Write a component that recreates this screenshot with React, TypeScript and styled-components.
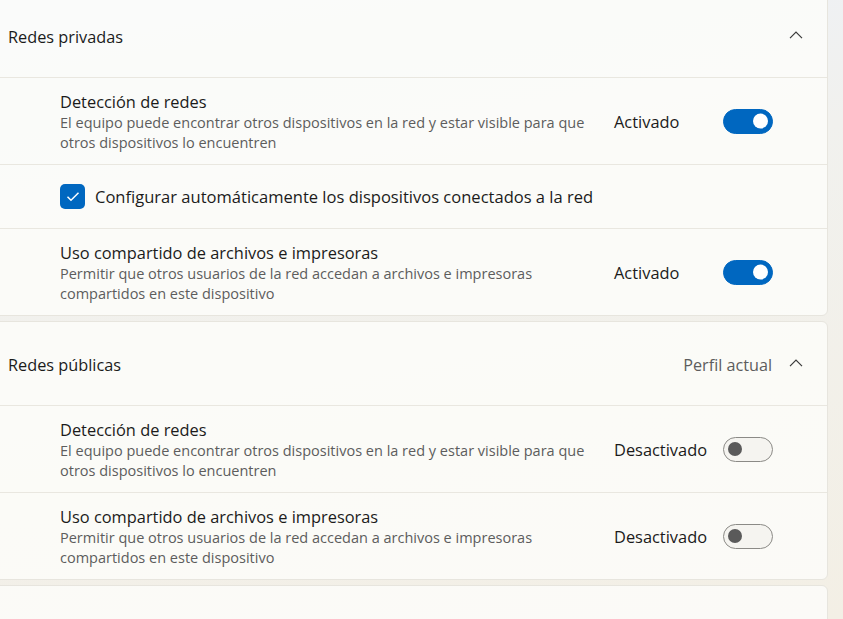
import React, { useState } from 'react';
import { createGlobalStyle, styled } from 'styled-components';

const GlobalStyle = createGlobalStyle`
  html, body {
    margin: 0;
    padding: 0;
    height: 100%;
    overflow: hidden;
  }
  body {
    font-family: "Open Sans", "Noto Sans", sans-serif;
    background: linear-gradient(170deg, #edf1f8 0%, #f1f1ee 35%, #f3efe5 100%);
    color: #1b1b1b;
  }
`;

const Page = styled.div`
  display: flex;
  flex-direction: column;
  gap: 5px;
  margin: -7px 15px 0 -12px;
`;

const Card = styled.section`
  background: rgba(252, 252, 250, 0.82);
  border: 1px solid #e7e5de;
  border-radius: 6px;
  overflow: hidden;
`;

const Header = styled.div<{ $height: number }>`
  display: flex;
  align-items: center;
  height: ${(p) => p.$height}px;
  padding: 3px 11px 0 19px;
  box-sizing: border-box;
`;

const HeaderTitle = styled.div`
  flex: 1;
  font-size: 16.3px;
`;

const HeaderMeta = styled.div`
  font-size: 16.2px;
  color: #5d5d5d;
  margin-right: 4px;
`;

const ChevronBox = styled.div`
  width: 40px;
  display: flex;
  justify-content: center;
  align-items: center;
  padding-bottom: 5px;
  color: #3a3a3a;
`;

const Row = styled.div<{ $height: number }>`
  display: flex;
  align-items: center;
  min-height: ${(p) => p.$height}px;
  padding: 0 54px 0 71px;
  border-top: 1px solid #e9e7e0;
`;

const RowText = styled.div`
  flex: 1;
  display: flex;
  flex-direction: column;
  padding-top: 3px;
`;

const RowTitle = styled.div`
  font-size: 16.4px;
  line-height: 20px;
  margin-bottom: 1px;
`;

const RowDesc = styled.div`
  font-size: 14.5px;
  line-height: 20px;
  color: #5d5d5d;
  max-width: 540px;
`;

const Status = styled.div`
  width: 94px;
  margin-right: 15px;
  font-size: 16.4px;
`;

const Track = styled.button<{ $on: boolean }>`
  position: relative;
  width: 50px;
  height: 25px;
  padding: 0;
  border-radius: 13px;
  cursor: pointer;
  border: ${(p) => (p.$on ? '1px solid #0067c0' : '1px solid #8b8a86')};
  background: ${(p) => (p.$on ? '#0067c0' : '#f5f4f0')};
`;

const Knob = styled.span<{ $on: boolean }>`
  position: absolute;
  top: 50%;
  left: ${(p) => (p.$on ? '29px' : '4px')};
  width: ${(p) => (p.$on ? '15px' : '14px')};
  height: ${(p) => (p.$on ? '15px' : '14px')};
  border-radius: 50%;
  transform: translateY(-50%);
  background: ${(p) => (p.$on ? '#ffffff' : '#5a5a5a')};
`;

const CheckLabel = styled.label`
  display: flex;
  align-items: center;
  gap: 10px;
  font-size: 16.55px;
  cursor: pointer;
`;

const CheckBox = styled.span`
  width: 25px;
  height: 25px;
  border-radius: 5px;
  background: #0067c0;
  display: flex;
  align-items: center;
  justify-content: center;
`;

const Chevron = () => (
  <svg width="14" height="8" viewBox="0 0 14 8" fill="none">
    <path d="M1 7.2L7 1.2L13 7.2" stroke="currentColor" strokeWidth="1.2" />
  </svg>
);

const Toggle: React.FC<{ initial: boolean }> = ({ initial }) => {
  const [on, setOn] = useState(initial);
  return (
    <>
      <Status>{on ? 'Activado' : 'Desactivado'}</Status>
      <Track type="button" $on={on} onClick={() => setOn(!on)}>
        <Knob $on={on} />
      </Track>
    </>
  );
};

const SettingRow: React.FC<{ title: string; desc: string; on: boolean }> = ({ title, desc, on }) => (
  <Row $height={86}>
    <RowText>
      <RowTitle>{title}</RowTitle>
      <RowDesc>{desc}</RowDesc>
    </RowText>
    <Toggle initial={on} />
  </Row>
);

const DISCOVERY = 'Detección de redes';
const DISCOVERY_DESC =
  'El equipo puede encontrar otros dispositivos en la red y estar visible para que otros dispositivos lo encuentren';
const SHARING = 'Uso compartido de archivos e impresoras';
const SHARING_DESC =
  'Permitir que otros usuarios de la red accedan a archivos e impresoras compartidos en este dispositivo';

export default function App() {
  return (
    <Page>
      <GlobalStyle />
      <Card>
        <Header $height={83}>
          <HeaderTitle>Redes privadas</HeaderTitle>
          <ChevronBox>
            <Chevron />
          </ChevronBox>
        </Header>
        <SettingRow title={DISCOVERY} desc={DISCOVERY_DESC} on />
        <Row $height={63}>
          <CheckLabel>
            <CheckBox>
              <svg width="14" height="11" viewBox="0 0 14 11" fill="none">
                <path d="M1.5 5.8L5 9.2L12.5 1.8" stroke="#fff" strokeWidth="1.5" />
              </svg>
            </CheckBox>
            Configurar automáticamente los dispositivos conectados a la red
          </CheckLabel>
        </Row>
        <SettingRow title={SHARING} desc={SHARING_DESC} on />
      </Card>
      <Card>
        <Header $height={83}>
          <HeaderTitle>Redes públicas</HeaderTitle>
          <HeaderMeta>Perfil actual</HeaderMeta>
          <ChevronBox>
            <Chevron />
          </ChevronBox>
        </Header>
        <SettingRow title={DISCOVERY} desc={DISCOVERY_DESC} on={false} />
        <SettingRow title={SHARING} desc={SHARING_DESC} on={false} />
      </Card>
      <Card>
        <Header $height={83} />
      </Card>
    </Page>
  );
}
